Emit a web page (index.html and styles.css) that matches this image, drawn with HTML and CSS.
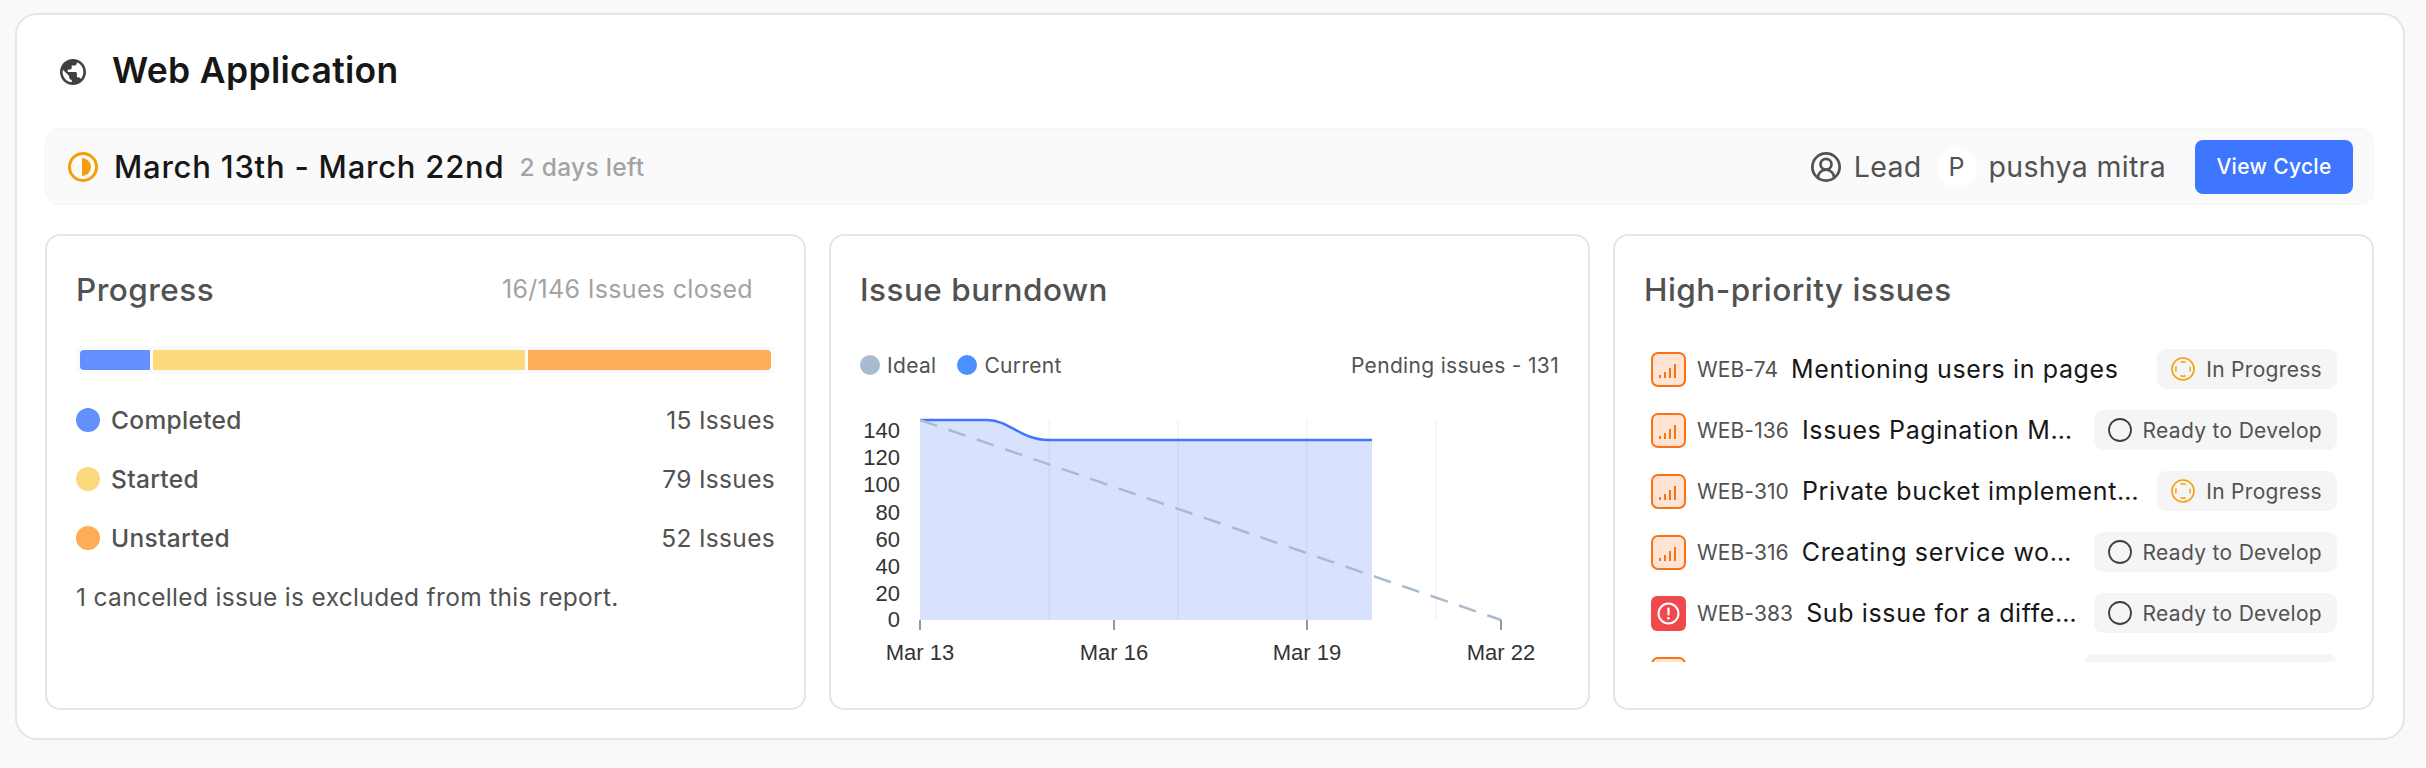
FILE: index.html
```html
<!DOCTYPE html>
<html lang="en">
<head>
    <meta charset="UTF-8">
    <meta name="viewport" content="width=device-width, initial-scale=1.0">
    <title>Web Application</title>
    <link rel="stylesheet" href="styles.css">
</head>
<body>
    <svg class="defs" width="0" height="0" aria-hidden="true">
        <symbol id="priority-medium" viewBox="0 0 35 35">
            <rect x="1" y="1" width="33" height="33" rx="6" fill="#ffe3d3" stroke="#f97316" stroke-width="2"/>
            <g fill="#f97316">
                <rect x="8" y="23" width="2" height="3"/>
                <rect x="13" y="20" width="2" height="6"/>
                <rect x="18" y="16" width="2" height="10"/>
                <rect x="23" y="12" width="2" height="14"/>
            </g>
        </symbol>
        <symbol id="priority-urgent" viewBox="0 0 35 35">
            <rect width="35" height="35" rx="6" fill="#f1484e"/>
            <circle cx="17.5" cy="17.5" r="10" fill="none" stroke="#fff" stroke-width="2"/>
            <path d="M17.5 12.5v6" stroke="#fff" stroke-width="2.2" stroke-linecap="round"/>
            <circle cx="17.5" cy="22.3" r="1.3" fill="#fff"/>
        </symbol>
        <symbol id="state-started" viewBox="0 0 24 24">
            <circle cx="12" cy="12" r="11" fill="none" stroke="#f59e0b" stroke-width="1.6"/>
            <circle cx="12" cy="12" r="7.2" fill="none" stroke="#f59e0b" stroke-width="1.4" stroke-dasharray="5.3 6" stroke-dashoffset="2.65"/>
        </symbol>
        <symbol id="state-ready" viewBox="0 0 24 24">
            <circle cx="12" cy="12" r="11" fill="none" stroke="#404040" stroke-width="1.8"/>
        </symbol>
    </svg>

    <div class="module">
        <div class="module-head">
            <svg class="globe" viewBox="2 2 20 20"><path d="M12 2C6.48 2 2 6.48 2 12s4.48 10 10 10 10-4.48 10-10S17.52 2 12 2zm-1 17.93c-3.95-.49-7-3.85-7-7.93 0-.62.08-1.21.21-1.79L9 15v1c0 1.1.9 2 2 2v1.93zm6.9-2.54c-.26-.81-1-1.39-1.9-1.39h-1v-3c0-.55-.45-1-1-1H8v-2h2c.55 0 1-.45 1-1V7h2c1.1 0 2-.9 2-2v-.41c2.93 1.19 5 4.06 5 7.41 0 2.08-.8 3.97-2.1 5.39z"/></svg>
            <h1>Web Application</h1>
        </div>

        <div class="cycle-bar">
            <svg class="cycle-icon" viewBox="0 0 30 30">
                <circle cx="15" cy="15" r="13.5" fill="none" stroke="#f59e0b" stroke-width="3"/>
                <path d="M14 6a9 9 0 0 1 0 18z" fill="#f59e0b"/>
            </svg>
            <span class="cycle-dates">March 13th - March 22nd</span>
            <span class="cycle-left">2 days left</span>
            <div class="cycle-lead">
                <svg class="lead-icon" viewBox="1 1 22 22"><path d="M18 20a6 6 0 0 0-12 0"/><circle cx="12" cy="10" r="4"/><circle cx="12" cy="12" r="10"/></svg>
                <span class="lead-label">Lead</span>
                <span class="avatar">P</span>
                <span class="lead-name">pushya mitra</span>
            </div>
            <button class="view-btn">View Cycle</button>
        </div>

        <div class="cards">
            <div class="card">
                <div class="card-head">
                    <h2>Progress</h2>
                    <span class="closed-count">16/146 Issues closed</span>
                </div>
                <div class="progress-track">
                    <div class="seg seg-completed"></div>
                    <div class="seg seg-started"></div>
                    <div class="seg seg-unstarted"></div>
                </div>
                <div class="legend-rows">
                    <div class="legend-row"><span class="dot dot-completed"></span><span class="legend-name">Completed</span><span>15 Issues</span></div>
                    <div class="legend-row"><span class="dot dot-started"></span><span class="legend-name">Started</span><span>79 Issues</span></div>
                    <div class="legend-row"><span class="dot dot-unstarted"></span><span class="legend-name">Unstarted</span><span>52 Issues</span></div>
                </div>
                <p class="note">1 cancelled issue is excluded from this report.</p>
            </div>

            <div class="card">
                <div class="card-head">
                    <h2>Issue burndown</h2>
                </div>
                <div class="chart-legend">
                    <span class="chart-dot dot-ideal"></span><span>Ideal</span>
                    <span class="chart-dot dot-current"></span><span>Current</span>
                    <span class="pending">Pending issues - 131</span>
                </div>
                <svg class="chart" viewBox="0 0 700 290">
                    <path d="M60 36H127C150 36 160 56 189 56H512V236H60z" fill="#d8e2fd"/>
                    <g stroke="#1f2a5a" stroke-opacity="0.05" stroke-width="1.5">
                        <path d="M189 36V236M318 36V236M447 36V236M576 36V236"/>
                    </g>
                    <path d="M60 36H127C150 36 160 56 189 56H512" fill="none" stroke="#3f76ff" stroke-width="2.5"/>
                    <path d="M60 36L641 236" fill="none" stroke="#a9bbd0" stroke-width="2.5" stroke-dasharray="18 12"/>
                    <path d="M60 236v10M254 236v10M447 236v10M641 236v10" stroke="#777" stroke-width="1.5"/>
                    <g class="y-labels">
                        <text x="40" y="54">140</text>
                        <text x="40" y="81">120</text>
                        <text x="40" y="108">100</text>
                        <text x="40" y="136">80</text>
                        <text x="40" y="163">60</text>
                        <text x="40" y="190">40</text>
                        <text x="40" y="217">20</text>
                        <text x="40" y="243">0</text>
                    </g>
                    <g class="x-labels">
                        <text x="60" y="276">Mar 13</text>
                        <text x="254" y="276">Mar 16</text>
                        <text x="447" y="276">Mar 19</text>
                        <text x="641" y="276">Mar 22</text>
                    </g>
                </svg>
            </div>

            <div class="card">
                <div class="card-head">
                    <h2>High-priority issues</h2>
                </div>
                <div class="issue-list">
                    <div class="issue">
                        <svg class="priority"><use href="#priority-medium"/></svg>
                        <span class="issue-id">WEB-74</span>
                        <span class="issue-title">Mentioning users in pages</span>
                        <span class="state"><svg class="state-icon"><use href="#state-started"/></svg>In Progress</span>
                    </div>
                    <div class="issue">
                        <svg class="priority"><use href="#priority-medium"/></svg>
                        <span class="issue-id">WEB-136</span>
                        <span class="issue-title">Issues Pagination Module</span>
                        <span class="state"><svg class="state-icon"><use href="#state-ready"/></svg>Ready to Develop</span>
                    </div>
                    <div class="issue">
                        <svg class="priority"><use href="#priority-medium"/></svg>
                        <span class="issue-id">WEB-310</span>
                        <span class="issue-title">Private bucket implementation</span>
                        <span class="state"><svg class="state-icon"><use href="#state-started"/></svg>In Progress</span>
                    </div>
                    <div class="issue">
                        <svg class="priority"><use href="#priority-medium"/></svg>
                        <span class="issue-id">WEB-316</span>
                        <span class="issue-title">Creating service workers</span>
                        <span class="state"><svg class="state-icon"><use href="#state-ready"/></svg>Ready to Develop</span>
                    </div>
                    <div class="issue">
                        <svg class="priority"><use href="#priority-urgent"/></svg>
                        <span class="issue-id">WEB-383</span>
                        <span class="issue-title">Sub issue for a different issue</span>
                        <span class="state"><svg class="state-icon"><use href="#state-ready"/></svg>Ready to Develop</span>
                    </div>
                    <div class="issue">
                        <svg class="priority"><use href="#priority-medium"/></svg>
                        <span class="state state-cut"></span>
                    </div>
                </div>
            </div>
        </div>
    </div>
</body>
</html>
```

FILE: styles.css
```css
* {
    box-sizing: border-box;
}
body {
    font-family: Inter, "Liberation Sans", sans-serif;
    letter-spacing: 0.02em;
    background-color: #f9f9f9;
    margin: 0;
    padding: 13px 21px 20px 15px;
    color: #525252;
}
.defs {
    position: absolute;
}
.module {
    background: #ffffff;
    border: 2px solid #e5e5e5;
    border-radius: 22px;
    padding: 0 29px 28px 28px;
    height: 727px;
}
.module-head {
    display: flex;
    align-items: center;
    gap: 26px;
    height: 113px;
    padding-left: 15px;
}
.globe {
    width: 26px;
    height: 26px;
    fill: #404040;
}
h1 {
    margin: 0 0 2px;
    font-size: 35.5px;
    font-weight: 600;
    color: #171717;
}
.cycle-bar {
    display: flex;
    align-items: center;
    height: 77px;
    padding: 0 20px 0 22px;
    background: #fafafa;
    border: 1px solid #f5f5f5;
    border-radius: 14px;
    margin-bottom: 29px;
}
.cycle-icon {
    width: 30px;
    height: 30px;
    margin-right: 16px;
}
.cycle-dates {
    font-size: 31px;
    font-weight: 500;
    letter-spacing: 0.025em;
    color: #171717;
}
.cycle-left {
    font-size: 24.5px;
    font-weight: 500;
    color: #a3a3a3;
    margin-left: 15px;
}
.cycle-lead {
    display: flex;
    align-items: center;
    margin-left: auto;
    font-size: 28.5px;
}
.lead-icon {
    width: 30px;
    height: 30px;
    fill: none;
    stroke: #525252;
    stroke-width: 2;
    margin-right: 13px;
}
.avatar {
    display: flex;
    align-items: center;
    justify-content: center;
    width: 40px;
    height: 40px;
    margin: 0 12px 0 15px;
    border-radius: 50%;
    background: #ffffff;
    font-size: 25px;
}
.view-btn {
    width: 158px;
    height: 54px;
    margin-left: 29px;
    background-color: #3f76ff;
    color: white;
    border: none;
    border-radius: 8px;
    font-family: inherit;
    font-size: 21px;
    font-weight: 500;
    letter-spacing: inherit;
}
.cards {
    display: grid;
    grid-template-columns: repeat(3, 1fr);
    gap: 23px;
    height: 476px;
}
.card {
    border: 2px solid #e5e5e5;
    border-radius: 15px;
    padding: 0 29px;
    overflow: hidden;
}
.card-head {
    display: flex;
    align-items: center;
    justify-content: space-between;
    height: 106px;
    margin-bottom: 4px;
}
h2 {
    margin: 0;
    font-size: 31.5px;
    font-weight: 500;
    letter-spacing: 0.015em;
    color: #525252;
}
.closed-count {
    font-size: 25px;
    color: #a3a3a3;
    margin-right: 22px;
}
.progress-track {
    display: flex;
    gap: 3px;
    height: 28px;
    padding: 4px;
    background: #fafafa;
    border-radius: 4px;
}
.seg {
    height: 20px;
}
.seg-completed {
    width: 70px;
    background: #6490fe;
    border-radius: 4px 0 0 4px;
}
.seg-started {
    width: 372px;
    background: #fcd97c;
}
.seg-unstarted {
    flex: 1;
    background: #ffac56;
    border-radius: 0 4px 4px 0;
}
.legend-rows {
    margin-top: 16px;
}
.legend-row {
    display: flex;
    align-items: center;
    height: 59px;
    font-size: 24.5px;
}
.dot {
    width: 24px;
    height: 24px;
    border-radius: 50%;
    margin-right: 11px;
}
.dot-completed {
    background: #6490fe;
}
.dot-started {
    background: #fcd97c;
}
.dot-unstarted {
    background: #ffac56;
}
.legend-name {
    flex: 1;
    font-weight: 500;
}
.note {
    margin: 15px 0 0;
    font-size: 24.5px;
    line-height: 30px;
}
.chart-legend {
    display: flex;
    align-items: center;
    height: 38px;
    font-size: 21px;
}
.chart-dot {
    width: 20px;
    height: 20px;
    border-radius: 50%;
    margin-right: 7px;
}
.dot-ideal {
    background: #a9bbd0;
}
.dot-current {
    background: #4c8fff;
    margin-left: 21px;
}
.pending {
    margin-left: auto;
}
.chart {
    display: block;
    width: 700px;
    height: 290px;
}
.chart text {
    font-family: "Liberation Sans", Arial, sans-serif;
    font-size: 22px;
    letter-spacing: 0;
    fill: #333333;
}
.y-labels text {
    text-anchor: end;
}
.x-labels text {
    text-anchor: middle;
}
.issue-list {
    height: 316px;
    margin: 0 6px 0 7px;
    padding-top: 3px;
    overflow: hidden;
}
.issue {
    display: flex;
    align-items: center;
    height: 40px;
    margin-bottom: 21px;
}
.priority {
    flex: none;
    width: 35px;
    height: 35px;
    margin-right: 11px;
}
.issue-id {
    flex: none;
    font-size: 21px;
    letter-spacing: 0.005em;
    margin-right: 13px;
}
.issue-title {
    flex: 1;
    min-width: 0;
    font-size: 25px;
    letter-spacing: 0.025em;
    color: #171717;
    white-space: nowrap;
    overflow: hidden;
    text-overflow: ellipsis;
    margin-right: 14px;
}
.state {
    flex: none;
    display: flex;
    align-items: center;
    height: 40px;
    margin-left: auto;
    padding: 0 15px 0 14px;
    gap: 11px;
    background: #f5f5f5;
    border-radius: 9px;
    font-size: 21px;
    letter-spacing: 0.015em;
}
.state-icon {
    width: 24px;
    height: 24px;
}
.state-cut {
    width: 253px;
}
```
